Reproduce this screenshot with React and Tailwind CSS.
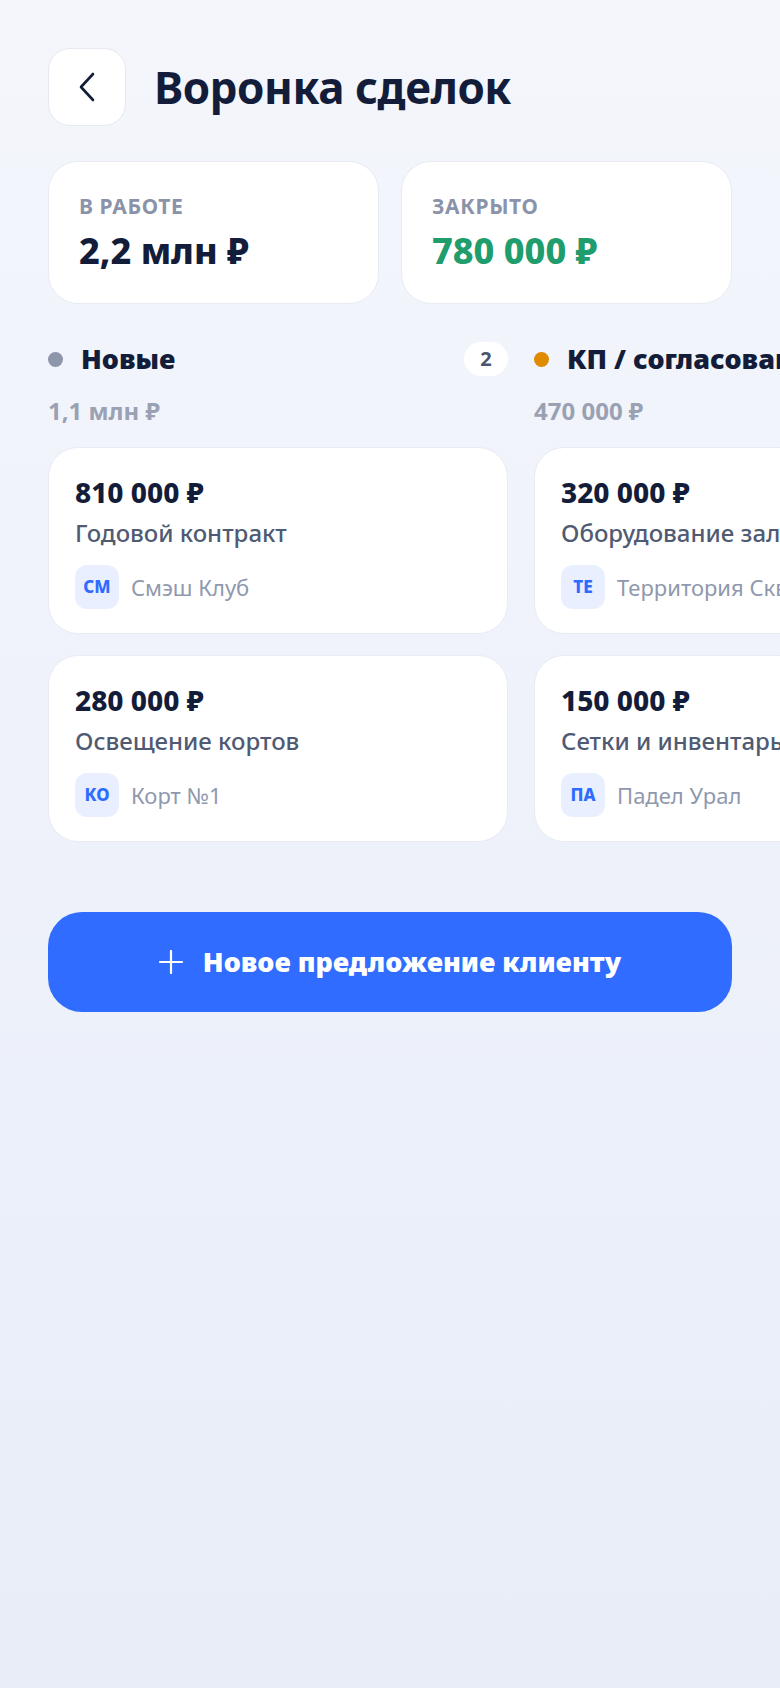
import React from "react";

const columns = [
  {
    title: "Новые",
    dot: "bg-[#8e96ab]",
    count: 2,
    sum: "1,1 млн ₽",
    deals: [
      { amount: "810 000 ₽", name: "Годовой контракт", client: "Смэш Клуб", short: "СМ" },
      { amount: "280 000 ₽", name: "Освещение кортов", client: "Корт №1", short: "КО" },
    ],
  },
  {
    title: "КП / согласование",
    dot: "bg-[#e08a00]",
    count: 2,
    sum: "470 000 ₽",
    deals: [
      { amount: "320 000 ₽", name: "Оборудование зала", client: "Территория Сквоша", short: "ТЕ" },
      { amount: "150 000 ₽", name: "Сетки и инвентарь", client: "Падел Урал", short: "ПА" },
    ],
  },
];

const DealCard = ({ deal }) => (
  <div className="bg-white rounded-[30px] border border-[#e8ebf2] px-[26px] pt-[28px] pb-[24px]">
    <div className="text-[28px] leading-[32px] font-extrabold text-[#131d3a]">{deal.amount}</div>
    <div className="mt-[10px] text-[24px] leading-[30px] font-medium text-[#505b73] whitespace-nowrap">
      {deal.name}
    </div>
    <div className="mt-[17px] flex items-center gap-[12px]">
      <div className="w-[44px] h-[44px] rounded-[12px] bg-[#e9efff] flex items-center justify-center text-[17px] font-extrabold text-[#2e6bff]">
        {deal.short}
      </div>
      <span className="text-[22px] text-[#8f98ad] whitespace-nowrap">{deal.client}</span>
    </div>
  </div>
);

const Column = ({ col }) => (
  <div className="w-[460px] shrink-0">
    <div className="flex items-center justify-between h-[34px]">
      <div className="flex items-center gap-[18px]">
        <span className={`w-[15px] h-[15px] rounded-full ${col.dot}`} />
        <span className="text-[27px] font-black text-[#131d3a] whitespace-nowrap">{col.title}</span>
      </div>
      <span className="h-[34px] min-w-[44px] px-[14px] rounded-full bg-white flex items-center justify-center text-[20px] font-bold text-[#4a5670]">
        {col.count}
      </span>
    </div>
    <div className="mt-[21px] text-[24px] leading-[28px] font-bold text-[#9aa1b3]">{col.sum}</div>
    <div className="mt-[22px] flex flex-col gap-[21px]">
      {col.deals.map((d) => (
        <DealCard key={d.amount} deal={d} />
      ))}
    </div>
  </div>
);

export default function App() {
  return (
    <div
      className="min-h-screen bg-gradient-to-b from-[#f4f6fc] to-[#e8edf8] px-[48px] pt-[48px] pb-10 overflow-hidden"
      style={{ fontFamily: '"Noto Sans", "Open Sans", sans-serif' }}
    >
      {/* Header */}
      <div className="flex items-center gap-[28px]">
        <button className="w-[78px] h-[78px] rounded-[22px] bg-white border border-[#e6e9f0] flex items-center justify-center">
          <svg width="18" height="30" viewBox="0 0 18 30" fill="none">
            <path d="M15 2 L3 15 L15 28" stroke="#131d3a" strokeWidth="2.6" strokeLinecap="round" strokeLinejoin="round" />
          </svg>
        </button>
        <h1 className="text-[44px] font-bold text-[#131d3a] tracking-[-0.01em]">Воронка сделок</h1>
      </div>

      {/* Totals */}
      <div className="mt-[35px] grid grid-cols-2 gap-[22px]">
        <div className="bg-white rounded-[30px] border border-[#e8ebf2] px-[30px] pt-[30px] pb-[32px]">
          <div className="text-[21px] leading-[28px] font-bold text-[#8b93aa] tracking-[0.03em]">В РАБОТЕ</div>
          <div className="mt-[11px] text-[36px] leading-[40px] font-extrabold text-[#131d3a]">2,2 млн ₽</div>
        </div>
        <div className="bg-white rounded-[30px] border border-[#e8ebf2] px-[30px] pt-[30px] pb-[32px]">
          <div className="text-[21px] leading-[28px] font-bold text-[#8b93aa] tracking-[0.03em]">ЗАКРЫТО</div>
          <div className="mt-[11px] text-[36px] leading-[40px] font-extrabold text-[#1f9d6c]">780 000 ₽</div>
        </div>
      </div>

      {/* Funnel columns */}
      <div className="mt-[38px] -mr-[48px] overflow-hidden">
        <div className="flex gap-[26px]">
          {columns.map((c) => (
            <Column key={c.title} col={c} />
          ))}
        </div>
      </div>

      {/* Action */}
      <button className="mt-[70px] w-full h-[100px] rounded-[34px] bg-[#306cff] flex items-center justify-center gap-[20px] text-white">
        <svg width="24" height="24" viewBox="0 0 24 24" fill="none">
          <path d="M12 1 V23 M1 12 H23" stroke="white" strokeWidth="2.2" strokeLinecap="round" />
        </svg>
        <span className="text-[27px] font-black">Новое предложение клиенту</span>
      </button>
    </div>
  );
}
